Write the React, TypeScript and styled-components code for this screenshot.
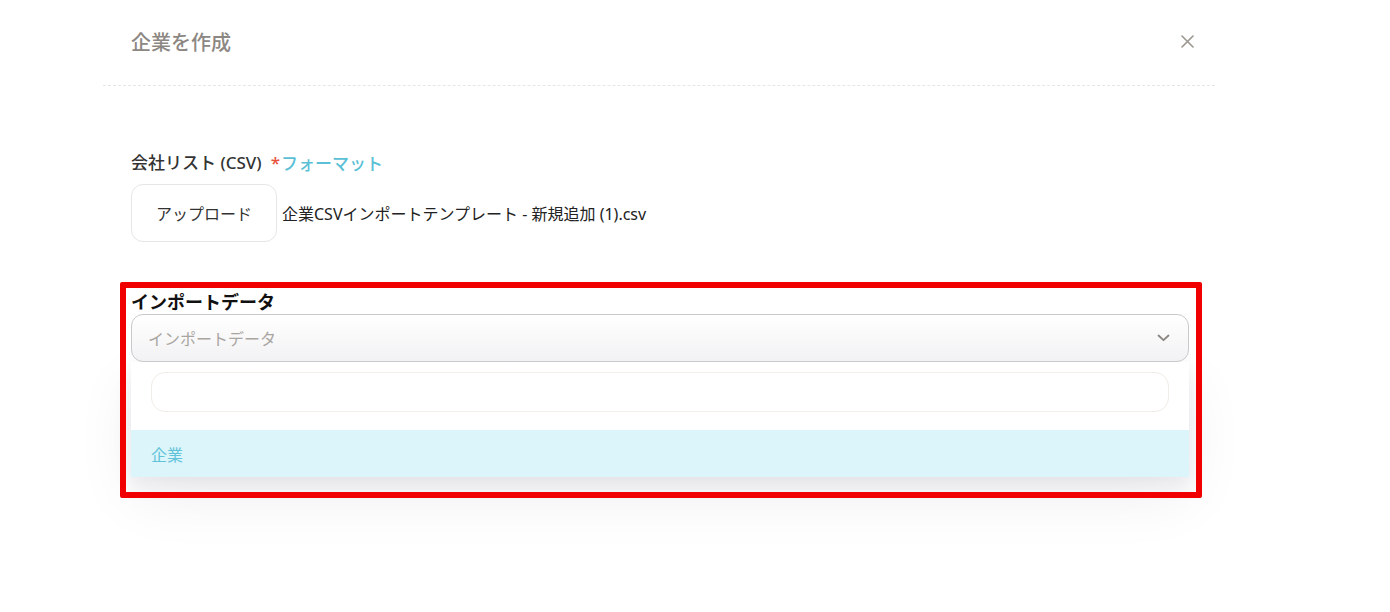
import React from "react";
import styled, { createGlobalStyle } from "styled-components";

const Global = createGlobalStyle`
  html, body { margin: 0; padding: 0; background: #ffffff; }
  body { font-family: "Noto Sans", "Noto Sans CJK JP", sans-serif; color: #333; }
  * { box-sizing: border-box; }
`;

const Page = styled.div`
  width: 1390px;
  height: 612px;
  overflow: hidden;
  padding-left: 103px;
`;

const Modal = styled.div`
  width: 1112px;
  background: #fff;
`;

const Header = styled.div`
  height: 86px;
  padding: 0 20px 2px 28px;
  display: flex;
  align-items: center;
  justify-content: space-between;
  border-bottom: 1px dashed #e6e6e6;
`;

const Title = styled.h2`
  margin: 0;
  font-size: 20px;
  font-weight: 500;
  color: #8c8782;
  font-family: "Noto Sans CJK JP", "Noto Sans", sans-serif;
`;

const Close = styled.button`
  border: 0;
  background: none;
  padding: 0;
  width: 16px;
  height: 16px;
  display: flex;
  align-items: center;
  justify-content: center;
  cursor: pointer;
`;

const Body = styled.div`
  padding: 65px 26px 40px 28px;
`;

const FieldLabel = styled.div`
  font-size: 17px;
  line-height: 24px;
  font-weight: 500;
  color: #333;
  display: flex;
  align-items: center;
`;

const Required = styled.span`
  color: #e8503a;
  margin-left: 9px;
  margin-right: 1px;
`;

const LinkText = styled.a`
  color: #5bbfd6;
  font-size: 17px;
  text-decoration: none;
  font-family: "Noto Sans CJK JP", sans-serif;
`;

const UploadRow = styled.div`
  margin-top: 9px;
  display: flex;
  align-items: center;
  gap: 5px;
`;

const UploadButton = styled.button`
  width: 146px;
  height: 58px;
  border: 1px solid #e6e6e6;
  border-radius: 12px;
  background: #fff;
  font-family: "Noto Sans CJK JP", sans-serif;
  font-size: 16px;
  color: #333;
  padding: 0;
`;

const FileName = styled.span`
  font-size: 16px;
  color: #222;
  font-family: "Noto Sans", "Noto Sans CJK JP", sans-serif;
`;

const Section = styled.div`
  position: relative;
  margin-top: 46px;
  width: 1058px;
`;

const Highlight = styled.div`
  position: absolute;
  left: -11px;
  right: -13px;
  top: -6px;
  bottom: -21px;
  border: 6px solid #f00000;
  border-radius: 2px;
  pointer-events: none;
  z-index: 5;
`;

const SectionLabel = styled.div`
  font-size: 18px;
  line-height: 26px;
  font-weight: 700;
  color: #111;
  font-family: "Noto Sans CJK JP", sans-serif;
`;

const Select = styled.div`
  height: 48px;
  border: 1px solid #c9c9cc;
  border-radius: 12px;
  background: linear-gradient(#ffffff, #f2f2f4);
  display: flex;
  align-items: center;
  justify-content: space-between;
  padding: 0 18px 0 16px;
  position: relative;
  z-index: 2;
`;

const Placeholder = styled.span`
  font-size: 16px;
  color: #a9a5a1;
  font-family: "Noto Sans CJK JP", sans-serif;
`;

const Menu = styled.div`
  background: #fff;
  box-shadow: 0 8px 18px rgba(30, 30, 60, 0.07), 0 20px 60px rgba(30, 30, 60, 0.07);
  padding-top: 10px;
`;

const SearchWrap = styled.div`
  padding: 0 20px;
`;

const Search = styled.input`
  width: 100%;
  height: 40px;
  border: 1px solid #f1ede7;
  border-radius: 14px;
  background: #fff;
  outline: none;
  font-size: 15px;
  padding: 0 14px;
`;

const Option = styled.div<{ $active?: boolean }>`
  margin-top: 18px;
  height: 47px;
  display: flex;
  align-items: center;
  padding-left: 20px;
  background: ${(p) => (p.$active ? "#dcf5fb" : "#fff")};
  color: #62c3d8;
  font-size: 16px;
  font-family: "Noto Sans CJK JP", sans-serif;
`;

export default function App() {
  return (
    <Page>
      <Global />
      <Modal>
        <Header>
          <Title>企業を作成</Title>
          <Close aria-label="close">
            <svg width="13" height="13" viewBox="0 0 13 13">
              <path d="M1 1L12 12M12 1L1 12" stroke="#9a958f" strokeWidth="1.6" strokeLinecap="round" />
            </svg>
          </Close>
        </Header>
        <Body>
          <FieldLabel>
            会社リスト (CSV)
            <Required>*</Required>
            <LinkText>フォーマット</LinkText>
          </FieldLabel>
          <UploadRow>
            <UploadButton>アップロード</UploadButton>
            <FileName>企業CSVインポートテンプレート - 新規追加 (1).csv</FileName>
          </UploadRow>
          <Section>
            <Highlight />
            <SectionLabel>インポートデータ</SectionLabel>
            <Select>
              <Placeholder>インポートデータ</Placeholder>
              <svg width="13" height="8" viewBox="0 0 13 8">
                <path d="M1.5 1.5L6.5 6.2L11.5 1.5" fill="none" stroke="#8a8580" strokeWidth="1.8" strokeLinecap="round" strokeLinejoin="round" />
              </svg>
            </Select>
            <Menu>
              <SearchWrap>
                <Search />
              </SearchWrap>
              <Option $active>企業</Option>
            </Menu>
          </Section>
        </Body>
      </Modal>
    </Page>
  );
}
